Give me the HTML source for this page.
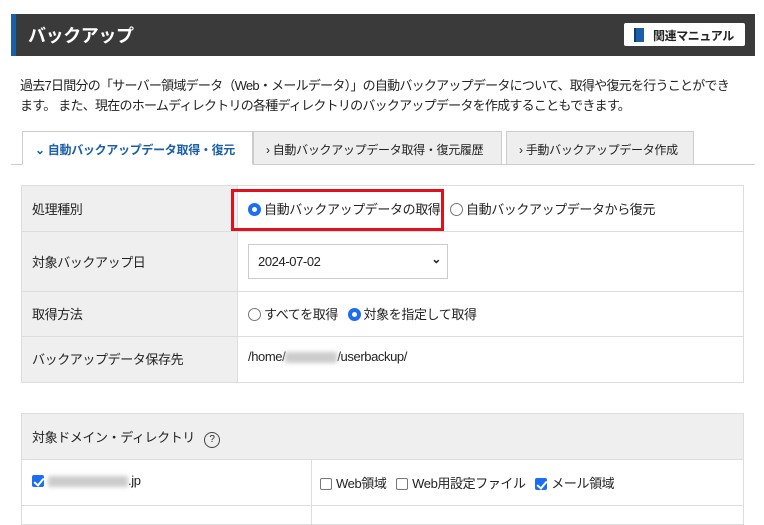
<!DOCTYPE html>
<html><head><meta charset="utf-8"><style>
*{box-sizing:border-box;margin:0;padding:0}
body{width:764px;height:516px;background:#fff;position:relative;overflow:hidden;font-family:"Liberation Sans","Noto Sans CJK JP",sans-serif;color:#222;font-size:13px;letter-spacing:-0.4px}
.a{position:absolute;white-space:nowrap}
.hdr{left:11px;top:14px;width:744px;height:42px;background:#3a3a3a;border-left:5px solid #1a5fa8}
.btn{left:624px;top:23px;width:121px;height:23px;background:#fff;border-radius:2px}
.tab{top:131px;height:34px;border:1px solid #ccc;background:#eee;font-size:12px;padding:9px 0 0 12px;letter-spacing:-0.3px}
.cell{position:absolute;border:1px solid #ddd}
.lab{background:#efefef}
.radio{display:inline-block;width:13px;height:13px;border:1px solid #777;border-radius:50%;vertical-align:-2px;margin-right:3px;background:#fff}
.radio.on{border:4px solid #1b6ef3}
.cb{display:inline-block;width:12px;height:12px;border:1px solid #777;border-radius:2px;vertical-align:-2px;margin-right:4px;background:#fff}
.cb.on{background:#1b6ef3;border-color:#1b6ef3;position:relative}
.cb.on:after{content:"";position:absolute;left:3px;top:0px;width:4px;height:8px;border:solid #fff;border-width:0 2px 2px 0;transform:rotate(40deg)}
.blur{display:inline-block;background:#ccc;filter:blur(2px);height:11px;vertical-align:middle}
</style></head><body>
<div class="a hdr"></div>
<div class="a" style="left:28px;top:22px;color:#fff;font-size:18px;font-weight:bold">バックアップ</div>
<div class="a btn"></div>
<div class="a" style="left:634px;top:28px;width:10px;height:14px;background:#1a5fa8;border-left:2px solid #0d3d70"></div>
<div class="a" style="left:653px;top:27px;font-size:12px;font-weight:bold;color:#222">関連マニュアル</div>
<div class="a" style="left:20px;top:76px;font-size:13px;line-height:20px;letter-spacing:-0.75px">過去7日間分の「サーバー領域データ（Web・メールデータ）」の自動バックアップデータについて、取得や復元を行うことができ<br>ます。 また、現在のホームディレクトリの各種ディレクトリのバックアップデータを作成することもできます。</div>
<div class="a" style="left:11px;top:164px;width:744px;height:1px;background:#ccc"></div>
<div class="a tab" style="left:22px;width:231px;background:#fff;border-bottom-color:#fff;color:#1a5fa8;font-weight:bold">⌄ 自動バックアップデータ取得・復元</div>
<div class="a tab" style="left:253px;width:249px">› 自動バックアップデータ取得・復元履歴</div>
<div class="a tab" style="left:506px;width:188px">› 手動バックアップデータ作成</div>

<div class="cell lab" style="left:21px;top:185px;width:217px;height:47px"></div>
<div class="cell" style="left:237px;top:185px;width:507px;height:47px"></div>
<div class="cell lab" style="left:21px;top:231px;width:217px;height:61px"></div>
<div class="cell" style="left:237px;top:231px;width:507px;height:61px"></div>
<div class="cell lab" style="left:21px;top:291px;width:217px;height:46px"></div>
<div class="cell" style="left:237px;top:291px;width:507px;height:46px"></div>
<div class="cell lab" style="left:21px;top:336px;width:217px;height:47px"></div>
<div class="cell" style="left:237px;top:336px;width:507px;height:47px"></div>
<div class="a" style="left:32px;top:199px">処理種別</div>
<div class="a" style="left:32px;top:252px">対象バックアップ日</div>
<div class="a" style="left:32px;top:304px">取得方法</div>
<div class="a" style="left:32px;top:349px">バックアップデータ保存先</div>
<div class="a" style="left:231px;top:189px;width:213px;height:42px;border:3px solid #e0101c"></div>
<div class="a" style="left:248px;top:199px"><span class="radio on"></span>自動バックアップデータの取得</div>
<div class="a" style="left:450px;top:199px"><span class="radio"></span>自動バックアップデータから復元</div>
<div class="a" style="left:248px;top:244px;width:200px;height:35px;border:1px solid #ccc;background:#fff;padding:9px 0 0 9px">2024-07-02<span style="position:absolute;right:6px;top:7px;font-size:12px;font-weight:bold">⌄</span></div>
<div class="a" style="left:248px;top:304px"><span class="radio"></span>すべてを取得 &nbsp;&nbsp;<span class="radio on"></span>対象を指定して取得</div>
<div class="a" style="left:248px;top:349px">/home/<span class="blur" style="width:52px"></span>/userbackup/</div>

<div class="cell lab" style="left:21px;top:413px;width:723px;height:47px"></div>
<div class="cell" style="left:21px;top:459px;width:291px;height:47px"></div>
<div class="cell" style="left:311px;top:459px;width:433px;height:47px"></div>
<div class="cell" style="left:21px;top:505px;width:291px;height:20px"></div>
<div class="cell" style="left:311px;top:505px;width:433px;height:20px"></div>
<div class="a" style="left:32px;top:427px">対象ドメイン・ディレクトリ <span style="display:inline-block;width:16px;height:16px;border:1px solid #444;border-radius:50%;font-size:10px;text-align:center;line-height:14px;margin-left:6px;letter-spacing:0">?</span></div>
<div class="a" style="left:32px;top:473px"><span class="cb on"></span><span class="blur" style="width:80px"></span>.jp</div>
<div class="a" style="left:320px;top:473px"><span class="cb"></span>Web領域 &nbsp;&nbsp;<span class="cb"></span>Web用設定ファイル &nbsp;&nbsp;<span class="cb on"></span>メール領域</div>
</body></html>
